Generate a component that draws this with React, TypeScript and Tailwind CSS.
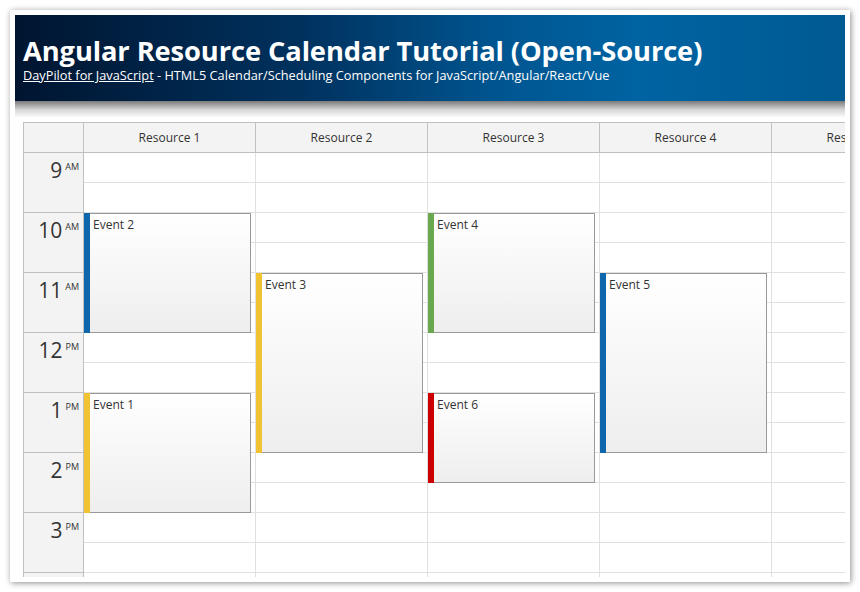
import React from 'react'

type CalEvent = { text: string; col: number; top: number; height: number; bar: string }

const resources = ['Resource 1', 'Resource 2', 'Resource 3', 'Resource 4', 'Resource 5']

const hours = [
  { n: '9', p: 'AM' },
  { n: '10', p: 'AM' },
  { n: '11', p: 'AM' },
  { n: '12', p: 'PM' },
  { n: '1', p: 'PM' },
  { n: '2', p: 'PM' },
  { n: '3', p: 'PM' },
  { n: '4', p: 'PM' },
]

// top/height in px from the 9 AM line, 30px per half hour
const events: CalEvent[] = [
  { text: 'Event 2', col: 0, top: 60, height: 120, bar: 'bg-[#1066aa]' },
  { text: 'Event 1', col: 0, top: 240, height: 120, bar: 'bg-[#f1c232]' },
  { text: 'Event 3', col: 1, top: 120, height: 180, bar: 'bg-[#f1c232]' },
  { text: 'Event 4', col: 2, top: 60, height: 120, bar: 'bg-[#6aa84f]' },
  { text: 'Event 6', col: 2, top: 240, height: 90, bar: 'bg-[#cc0000]' },
  { text: 'Event 5', col: 3, top: 120, height: 180, bar: 'bg-[#1066aa]' },
]

const EventBox: React.FC<{ e: CalEvent }> = ({ e }) => (
  <div
    className="absolute left-0 w-[167px] flex border border-l-0 border-[#999999] bg-gradient-to-b from-white to-[#eeeeee]"
    style={{ top: e.top, height: e.height }}
  >
    <div className={`w-[6px] -my-px ${e.bar}`} />
    <div className="pl-[3px] pt-[3px] text-[12px] leading-[16px] text-[#333333]">{e.text}</div>
  </div>
)

export default function App() {
  return (
    <div className="w-[860px] h-[592px] bg-white overflow-hidden pt-[10px] pl-[10px]" style={{ fontFamily: '"Open Sans", "Noto Sans", sans-serif' }}>
      <div className="w-[840px] h-[572px] bg-white p-[5px] shadow-[1px_1px_6px_rgba(0,0,0,0.45)]">
        {/* Header */}
        <div className="h-[86px] px-2 pt-[21px] bg-[linear-gradient(to_right,#001530_0%,#00325f_35%,#005590_58%,#0063a2_75%,#005a92_100%)]">
          <h1 className="text-white font-bold text-[27.3px] leading-[30px] tracking-[-0.1px]">
            Angular Resource Calendar Tutorial (Open-Source)
          </h1>
          <div className="text-white text-[12.75px] leading-[16px] mt-[1px]">
            <a className="underline">DayPilot for JavaScript</a> - HTML5 Calendar/Scheduling Components for JavaScript/Angular/React/Vue
          </div>
        </div>
        <div className="h-[17px] bg-gradient-to-b from-[#7b7b7b] via-[#d4d4d4] to-white" />

        {/* Calendar */}
        <div className="ml-2 mt-[4px] w-[822px] h-[455px] overflow-hidden border-l border-t border-[#c0c0c0] text-[#333333]">
          <div className="flex w-max">
            <div className="w-[60px] h-[30px] shrink-0 bg-[#f3f3f3] border-r border-b border-[#c0c0c0]" />
            {resources.map((r) => (
              <div
                key={r}
                className="w-[172px] h-[30px] shrink-0 bg-[#f3f3f3] border-r border-b border-[#c0c0c0] flex items-center justify-center pt-px text-[12px]"
              >
                {r}
              </div>
            ))}
          </div>
          <div className="flex w-max">
            <div className="w-[60px] shrink-0">
              {hours.map((h) => (
                <div
                  key={h.n}
                  className="h-[60px] bg-[#f3f3f3] border-r border-b border-[#c0c0c0] flex justify-end pr-[4px] pt-[4px]"
                >
                  <span className="text-[21px] leading-[26px] text-[#333333]">{h.n}</span>
                  <span className="text-[9px] leading-[10px] ml-[3px] mt-[5px]">{h.p}</span>
                </div>
              ))}
            </div>
            {resources.map((r, ci) => (
              <div key={r} className="w-[172px] shrink-0 relative">
                {hours.flatMap(() => [0, 1]).map((_, i) => (
                  <div key={i} className="h-[30px] border-r border-b border-[#e0e0e0] bg-white" />
                ))}
                {events
                  .filter((e) => e.col === ci)
                  .map((e) => (
                    <EventBox key={e.text} e={e} />
                  ))}
              </div>
            ))}
          </div>
        </div>
      </div>
    </div>
  )
}
